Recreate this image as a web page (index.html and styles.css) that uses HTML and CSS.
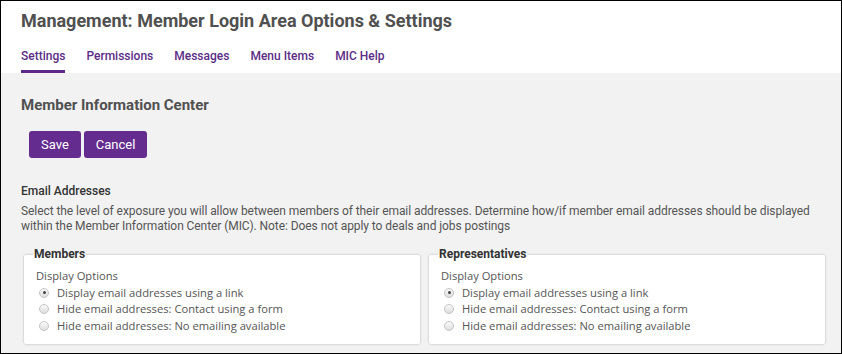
FILE: index.html
```html
<!DOCTYPE html>
<html lang="en">
<head>
  <meta charset="UTF-8">
  <title>Management: Member Login Area Options &amp; Settings</title>
  <link rel="stylesheet" href="styles.css">
</head>
<body>
  <div class="frame">
    <div class="header">
      <h1>Management: Member Login Area Options &amp; Settings</h1>
      <div class="tabs">
        <span class="tab active">Settings</span>
        <span class="tab">Permissions</span>
        <span class="tab">Messages</span>
        <span class="tab">Menu Items</span>
        <span class="tab">MIC Help</span>
      </div>
    </div>
    <div class="content">
      <h2>Member Information Center</h2>
      <div class="buttons">
        <button class="btn">Save</button>
        <button class="btn">Cancel</button>
      </div>
      <div class="section-title">Email Addresses</div>
      <p class="desc">Select the level of exposure you will allow between members of their email addresses. Determine how/if member email addresses should be displayed within the Member Information Center (MIC). Note: Does not apply to deals and jobs postings</p>
      <div class="groups">
        <fieldset>
          <legend>Members</legend>
          <div class="opt-label">Display Options</div>
          <label class="radio"><span class="dot checked"></span>Display email addresses using a link</label>
          <label class="radio"><span class="dot"></span>Hide email addresses: Contact using a form</label>
          <label class="radio"><span class="dot"></span>Hide email addresses: No emailing available</label>
        </fieldset>
        <fieldset>
          <legend>Representatives</legend>
          <div class="opt-label">Display Options</div>
          <label class="radio"><span class="dot checked"></span>Display email addresses using a link</label>
          <label class="radio"><span class="dot"></span>Hide email addresses: Contact using a form</label>
          <label class="radio"><span class="dot"></span>Hide email addresses: No emailing available</label>
        </fieldset>
      </div>
    </div>
  </div>
</body>
</html>
```

FILE: styles.css
```css
body {
  margin: 0;
  font-family: Roboto, 'Liberation Sans', Arial, sans-serif;
}
.frame {
  width: 842px;
  height: 354px;
  box-sizing: border-box;
  border: 1px solid #000;
  background: #f2f2f2;
  overflow: hidden;
}
.header {
  background: #fff;
  height: 72px;
  padding: 0 20px;
  box-sizing: border-box;
}
h1 {
  margin: 0;
  padding-top: 9px;
  font-size: 18px;
  line-height: 22px;
  font-weight: 700;
  color: #505050;
}
.tabs {
  display: flex;
  gap: 21px;
  margin-top: 16px;
}
.tab {
  font-size: 12px;
  line-height: 16px;
  font-weight: 500;
  color: #5b2d86;
  padding-bottom: 6px;
  border-bottom: 3px solid transparent;
}
.tab.active {
  border-bottom-color: #5e2a8a;
}
.content {
  padding: 23px 15px 0 20px;
}
h2 {
  margin: 0;
  font-size: 15px;
  line-height: 18px;
  font-weight: 700;
  color: #505050;
}
.buttons {
  display: flex;
  gap: 3px;
  margin: 17px 0 0 8px;
}
.btn {
  height: 27px;
  padding: 0 12px;
  border: none;
  border-radius: 3px;
  background: #652c8f;
  color: #fff;
  font-family: Roboto, 'Liberation Sans', Arial, sans-serif;
  font-size: 13px;
}
.section-title {
  margin-top: 26px;
  font-size: 12px;
  line-height: 15px;
  font-weight: 500;
  color: #333;
}
.desc {
  margin: 5px 0 0;
  font-size: 12px;
  line-height: 15px;
  letter-spacing: -0.07px;
  color: #555;
}
.groups {
  display: grid;
  grid-template-columns: 1fr 1fr;
  gap: 7px;
  margin: 13px 0 0 2px;
}
fieldset {
  margin: 0;
  padding: 6px 12px 10px;
  background: #fff;
  border: 1px solid #dcdcdc;
  border-radius: 3px;
  box-shadow: 0 0 2px rgba(0,0,0,0.08);
}
legend {
  margin-left: -3px;
  padding: 0 1px;
  font-size: 12px;
  line-height: 15px;
  font-weight: 700;
  color: #333;
}
.opt-label, .radio {
  font-family: 'Open Sans', 'Noto Sans', sans-serif;
  font-size: 11.2px;
  line-height: 16.5px;
  color: #555;
}
.radio {
  display: flex;
  align-items: center;
}
.dot {
  width: 10px;
  height: 10px;
  margin: 0 8px 0 3px;
  border-radius: 50%;
  border: 1px solid #c4c4c4;
  background: linear-gradient(#fafafa, #dedede);
  box-sizing: border-box;
  position: relative;
}
.dot.checked::after {
  content: "";
  position: absolute;
  left: 2.5px;
  top: 2.5px;
  width: 3px;
  height: 3px;
  border-radius: 50%;
  background: #444;
}
```
